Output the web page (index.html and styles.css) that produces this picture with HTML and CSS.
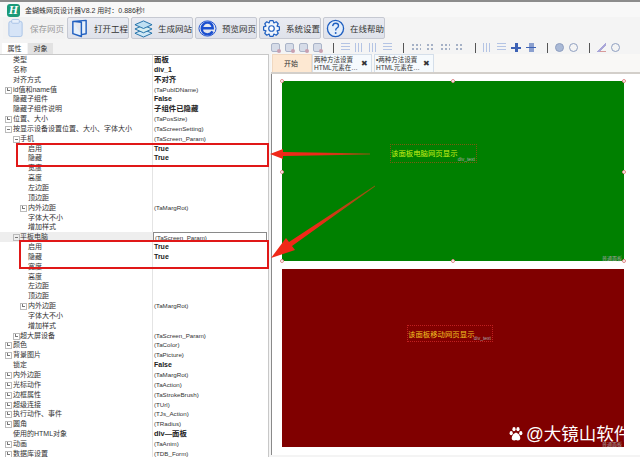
FILE: index.html
```html
<!DOCTYPE html>
<html lang="zh-CN">

<head>
    <meta charset="UTF-8">
    <meta name="viewport" content="width=device-width, initial-scale=1.0">
    <title>金蝶蛛网页设计器</title>
    <link rel="stylesheet" href="styles.css">
</head>

<body>
    <div class="window">
        <header class="titlebar">
            <span class="logo">H</span>
            <span class="title">金蝴蛛网页设计器V8.2 用时：0.886秒!</span>
        </header>

        <nav class="toolbar">
            <button class="tool off">
                <svg viewBox="0 0 20 20" width="19" height="20"><rect x="3" y="3" width="14" height="16" rx="2" fill="#d6e4f7" stroke="#a9c3e6"/><rect x="6" y="1" width="8" height="4" rx="1" fill="#e6effb" stroke="#a9c3e6"/></svg>
                <span>保存网页</span>
            </button>
            <button class="tool">
                <svg viewBox="0 0 20 20" width="19" height="20"><path d="M3 3 L17 2 V16 L12 17 V4 L3 3 V16 L12 19 V17" fill="#e6f0fb" stroke="#1f5fc0" stroke-width="1.500" stroke-linejoin="round"/></svg>
                <span>打开工程</span>
            </button>
            <button class="tool">
                <svg viewBox="0 0 20 20" width="20" height="19"><path d="M10 11 L1 15 L10 19 L19 15 Z" fill="#cfe8f5" stroke="#1d6fa8"/><path d="M10 6.500 L1 10.500 L10 14.500 L19 10.500 Z" fill="#d8eef0" stroke="#1d6fa8"/><path d="M10 2 L1 6 L10 10 L19 6 Z" fill="#bfe0f2" stroke="#1d6fa8"/></svg>
                <span>生成网站</span>
            </button>
            <button class="tool">
                <svg viewBox="0 0 20 20" width="19" height="19"><ellipse cx="10" cy="10" rx="9" ry="8" fill="none" stroke="#1a4fd0" stroke-width="1"/><path d="M4.500 9.800 H15.500 C15.500 5 12.500 3.800 10 3.800 C6.500 3.800 4 6.500 4 10 C4 13.500 6.500 16.200 10 16.200 C12.500 16.200 14.300 15 15.300 13" fill="none" stroke="#1a4fd0" stroke-width="2.600"/></svg>
                <span>预览网页</span>
            </button>
            <button class="tool">
                <svg viewBox="0 0 24 24" width="19" height="19"><path d="M10 2 H14 L15 5 L18 3.500 L20.500 6 L19 9 L22 10 V14 L19 15 L20.500 18 L18 20.500 L15 19 L14 22 H10 L9 19 L6 20.500 L3.500 18 L5 15 L2 14 V10 L5 9 L3.500 6 L6 3.500 L9 5 Z" fill="#eef4fc" stroke="#1f5fc0" stroke-width="1.500" stroke-linejoin="round"/><circle cx="12" cy="12" r="3.500" fill="#fff" stroke="#1f5fc0" stroke-width="1.500"/></svg>
                <span>系统设置</span>
            </button>
            <button class="tool">
                <svg viewBox="0 0 20 20" width="19" height="19"><circle cx="10" cy="10" r="8.500" fill="#e4eefb" stroke="#1f5fc0" stroke-width="1.400"/><path d="M7 7.500 Q7.500 4.500 10.300 4.500 Q13.200 4.500 13.200 7 Q13.200 8.700 11.300 9.700 Q10.200 10.400 10.200 12" fill="none" stroke="#1f5fc0" stroke-width="1.400"/><circle cx="10.200" cy="14.800" r="1" fill="#1f5fc0"/></svg>
                <span>在线帮助</span>
            </button>
        </nav>

        <div class="workspace">
            <section class="props">
                <div class="prop-tabs">
                    <span class="prop-tab active">属性</span>
                    <span class="prop-tab">对象</span>
                </div>
                <div class="grid">
                    <div class="row"><span class="name">类型</span><b class="val big">面板</b></div>
                    <div class="row"><span class="name">名称</span><b class="val">div_1</b></div>
                    <div class="row"><span class="name">对齐方式</span><b class="val big">不对齐</b></div>
                    <div class="row plus"><span class="name">id值和name值</span><span class="val">(TaPubIDName)</span></div>
                    <div class="row"><span class="name">隐藏子组件</span><b class="val">False</b></div>
                    <div class="row"><span class="name">隐藏子组件说明</span><b class="val big">子组件已隐藏</b></div>
                    <div class="row plus"><span class="name">位置、大小</span><span class="val">(TaPosSize)</span></div>
                    <div class="row minus"><span class="name">按显示设备设置位置、大小、字体大小</span><span class="val">(TaScreenSetting)</span></div>
                    <div class="row l1 minus"><span class="name">手机</span><span class="val">(TaScreen_Param)</span></div>
                    <div class="row l2"><span class="name">启用</span><b class="val">True</b></div>
                    <div class="row l2"><span class="name">隐藏</span><b class="val">True</b></div>
                    <div class="row l2"><span class="name">宽度</span></div>
                    <div class="row l2"><span class="name">高度</span></div>
                    <div class="row l2"><span class="name">左边距</span></div>
                    <div class="row l2"><span class="name">顶边距</span></div>
                    <div class="row l2 plus"><span class="name">内外边距</span><span class="val">(TaMargRot)</span></div>
                    <div class="row l2"><span class="name">字体大不小</span></div>
                    <div class="row l2"><span class="name">增加样式</span></div>
                    <div class="row l1 minus current"><span class="name">平板电脑</span><span class="val edit">(TaScreen_Param)</span></div>
                    <div class="row l2"><span class="name">启用</span><b class="val">True</b></div>
                    <div class="row l2"><span class="name">隐藏</span><b class="val">True</b></div>
                    <div class="row l2"><span class="name">宽度</span></div>
                    <div class="row l2"><span class="name">高度</span></div>
                    <div class="row l2"><span class="name">左边距</span></div>
                    <div class="row l2"><span class="name">顶边距</span></div>
                    <div class="row l2 plus"><span class="name">内外边距</span><span class="val">(TaMargRot)</span></div>
                    <div class="row l2"><span class="name">字体大不小</span></div>
                    <div class="row l2"><span class="name">增加样式</span></div>
                    <div class="row l1 plus"><span class="name">超大屏设备</span><span class="val">(TaScreen_Param)</span></div>
                    <div class="row plus"><span class="name">颜色</span><span class="val">(TaColor)</span></div>
                    <div class="row plus"><span class="name">背景图片</span><span class="val">(TaPicture)</span></div>
                    <div class="row"><span class="name">锁定</span><b class="val">False</b></div>
                    <div class="row plus"><span class="name">内外边距</span><span class="val">(TaMargRot)</span></div>
                    <div class="row plus"><span class="name">光标动作</span><span class="val">(TaAction)</span></div>
                    <div class="row plus"><span class="name">边框属性</span><span class="val">(TaStrokeBrush)</span></div>
                    <div class="row plus"><span class="name">超级连接</span><span class="val">(TUrl)</span></div>
                    <div class="row plus"><span class="name">执行动作、事件</span><span class="val">(TJs_Action)</span></div>
                    <div class="row plus"><span class="name">圆角</span><span class="val">(TRadius)</span></div>
                    <div class="row"><span class="name">使用的HTML对象</span><b class="val big">div—面板</b></div>
                    <div class="row plus"><span class="name">动画</span><span class="val">(TaAnim)</span></div>
                    <div class="row plus"><span class="name">数据库设置</span><span class="val">(TDB_Form)</span></div>
                </div>
            </section>

            <section class="design">
                <div class="mini-tools">
                    <i class="mini sq"></i><i class="mini sq"></i><i class="mini sq"></i><i class="mini sq"></i>
                    <i class="sep"></i>
                    <i class="mini lines"></i><i class="mini bars"></i><i class="mini bars"></i><i class="mini lines"></i>
                    <i class="sep"></i>
                    <i class="mini dots"></i><i class="mini dots"></i><i class="mini dots"></i><i class="mini dots"></i>
                    <i class="sep"></i>
                    <i class="mini bars"></i><i class="mini lines"></i><i class="mini cross"></i><i class="mini cross flat"></i>
                    <i class="sep"></i>
                    <i class="mini ball"></i><i class="mini ball ring"></i>
                    <i class="sep"></i>
                    <i class="mini pen"></i><i class="mini ball ring"></i>
                </div>
                <div class="doc-tabs">
                    <span class="doc-tab start">开始</span>
                    <span class="doc-tab"><span class="doc-name">两种方法设置<br>HTML元素在…</span><span class="close">✖</span></span>
                    <span class="doc-tab"><span class="doc-name">•两种方法设置<br>HTML元素在…</span><span class="close">✖</span></span>
                </div>
                <div class="canvas">
                    <div class="panel green">
                        <i class="knob k1"></i><i class="knob k2"></i><i class="knob k3"></i><i class="knob k4"></i><i class="knob k5"></i><i class="knob k6"></i><i class="knob k7"></i><i class="knob k8"></i>
                        <div class="label pc">该面板电脑网页显示<small>div_text</small></div>
                        <em class="tag">普通面板</em>
                    </div>
                    <div class="panel red">
                        <div class="label mobile">该面板移动网页显示<small>div_text</small></div>
                        <em class="tag">普通面板</em>
                    </div>
                </div>
            </section>
        </div>

        <div class="mark mark-a"></div>
        <div class="mark mark-b"></div>
        <svg class="arrows" viewBox="0 0 640 457" width="640" height="457">
            <defs>
                <linearGradient id="fade-a" x1="1" y1="0" x2="0" y2="0">
                    <stop offset="0" stop-color="#8a5a10"/>
                    <stop offset="0.5" stop-color="#f02818"/>
                </linearGradient>
                <linearGradient id="fade-b" x1="1" y1="0" x2="0" y2="1">
                    <stop offset="0" stop-color="#8a5a10"/>
                    <stop offset="0.6" stop-color="#f02818"/>
                </linearGradient>
            </defs>
            <path d="M370 153.500 L283 152 L283 149 L270 154 L283 159 L283 156 L370 154.500 Z" fill="url(#fade-a)"/>
            <path d="M375 185.500 L289 242 L286 238 L271 258 L295 250 L292 246 L375 186.500 Z" fill="url(#fade-b)"/>
        </svg>
        <div class="watermark">
            <svg viewBox="0 0 20 20" width="16" height="16"><ellipse cx="4" cy="9" rx="2" ry="2.600" fill="#fff"/><ellipse cx="7.500" cy="4" rx="2" ry="2.600" fill="#fff"/><ellipse cx="12.500" cy="4" rx="2" ry="2.600" fill="#fff"/><ellipse cx="16" cy="9" rx="2" ry="2.600" fill="#fff"/><path d="M10 8 Q6 9 5 13 Q3.500 18 8 18 Q10 17 12 18 Q16.500 18 15 13 Q14 9 10 8 Z" fill="#fff"/></svg>
            <span>@大镜山软件</span>
        </div>
    </div>
</body>

</html>
```

FILE: styles.css
```css
* {
    margin: 0;
    padding: 0;
    box-sizing: border-box;
}

body {
    background: #f4f4f4;
    font-family: "Liberation Sans", "Noto Sans CJK SC", sans-serif;
    font-size: 9px;
    color: #333;
    overflow: hidden;
}

.window {
    position: relative;
    width: 640px;
    height: 457px;
    overflow: hidden;
}

/* title */
.titlebar {
    display: flex;
    align-items: center;
    gap: 5px;
    height: 17px;
    padding: 1px 0 0 7px;
    background: #f8f8f8;
    border-top: 2px solid #8c8c8c;
}

.logo {
    width: 13px;
    height: 13px;
    border-radius: 3px;
    background: #1b9a78;
    color: #fff;
    font: italic bold 12px/13px "Liberation Serif", serif;
    text-align: center;
}

.title {
    font-size: 7px;
    color: #333;
    white-space: nowrap;
}

/* big buttons */
.toolbar {
    display: flex;
    gap: 2px;
    height: 24px;
    padding-left: 3px;
    background: #f4f4f4;
}

.tool {
    display: flex;
    align-items: center;
    gap: 5px;
    width: 62px;
    height: 22px;
    padding-left: 2px;
    background: linear-gradient(#e9ebf2, #dfe2ea);
    border: 1px solid #c6c9d2;
    border-radius: 2px;
    font: 8.500px "Liberation Sans", "Noto Sans CJK SC", sans-serif;
    color: #333;
}

.tool.off {
    background: #f2f2f2;
    border-color: #f2f2f2;
    color: #9a9a9a;
}

.tool span {
    white-space: nowrap;
}

/* main area */
.workspace {
    display: flex;
    height: 414px;
}

.props {
    width: 271px;
    flex: none;
    padding-top: 2px;
}

.prop-tabs {
    display: flex;
    gap: 1px;
    height: 11px;
    padding-left: 2px;
}

.prop-tab {
    width: 25px;
    line-height: 11px;
    text-align: center;
    font-size: 7px;
    background: #e2e2e2;
}

.prop-tab.active {
    background: #fff;
}

.grid {
    width: 269px;
    height: 404px;
    background: #fff;
    border: 1px solid #c8c8c8;
    border-width: 1px 1px 0 0;
    overflow: hidden;
    background-image: linear-gradient(#e4e4e4, #e4e4e4);
    background-size: 1px 100%;
    background-position: 152px 0;
    background-repeat: no-repeat;
}

.row {
    position: relative;
    display: flex;
    height: 9.850px;
    line-height: 10px;
    font-size: 7px;
    white-space: nowrap;
}

.name {
    width: 154px;
    flex: none;
    padding-left: 13px;
}

.l1 .name {
    padding-left: 20px;
}

.l2 .name {
    padding-left: 28px;
}

.val {
    font-size: 6.200px;
}

b.val {
    font-size: 7px;
    color: #222;
}

b.val.big {
    font-size: 7.400px;
}

.plus::before,
.minus::before {
    content: "";
    position: absolute;
    left: 5px;
    top: 2px;
    width: 5px;
    height: 5px;
    border: 1px solid #bbb;
    background: linear-gradient(#777, #777) center / 3px 1px no-repeat;
}

.plus::after {
    content: "";
    position: absolute;
    left: 7px;
    top: 3px;
    width: 1px;
    height: 3px;
    background: #777;
}

.l1.plus::before,
.l1.minus::before {
    left: 13px;
}

.l1.plus::after {
    left: 15px;
}

.l2.plus::before {
    left: 20px;
}

.l2.plus::after {
    left: 22px;
}

.current .name {
    background: #eeeeee;
}

.edit {
    width: 114px;
    margin-left: -1px;
    padding-left: 1px;
    border: 1px solid #8a8a8a;
    line-height: 9px;
}

/* right side */
.design {
    flex: 1;
    min-width: 0;
}

.mini-tools {
    display: flex;
    align-items: center;
    gap: 5px;
    height: 13px;
}

.mini {
    display: block;
    width: 9px;
    height: 9px;
    flex: none;
}

.sq {
    position: relative;
    background: #d6dce8;
    border: 1px solid #aab4c8;
    border-radius: 2px;
}

.sq::after {
    content: "";
    position: absolute;
    right: -2px;
    bottom: -2px;
    width: 4px;
    height: 4px;
    border-radius: 50%;
    background: #c8a0b0;
}

.lines {
    background: repeating-linear-gradient(#b4c4e4 0 1px, transparent 1px 3px);
}

.bars {
    background: repeating-linear-gradient(90deg, #b4c4e4 0 1px, transparent 1px 3px);
}

.dots {
    width: 9.500px;
    background: radial-gradient(#a5b1c6 30%, transparent 35%) 0 0 / 4px 4px;
}

.cross {
    width: 10px;
    background: linear-gradient(#3d62b5, #3d62b5) center / 100% 2px no-repeat, linear-gradient(#3d62b5, #3d62b5) center / 3px 100% no-repeat;
}

.cross.flat {
    background: linear-gradient(#3d62b5, #3d62b5) center / 100% 1px no-repeat, linear-gradient(#8ba0cf, #8ba0cf) center / 5px 100% no-repeat;
}

.ball {
    border-radius: 50%;
    background: #a9b9d6;
    border: 1px solid #8f9fc0;
}

.ball.ring {
    background: transparent;
}

.pen {
    background: linear-gradient(135deg, transparent 45%, #a9a6d8 45% 65%, transparent 65%), linear-gradient(#d89a9a, #d89a9a) bottom / 100% 1px no-repeat;
}

.sep {
    display: block;
    width: 1px;
    height: 10px;
    margin: 0 2px 0 6px;
    flex: none;
    background: #555;
}

.doc-tabs {
    display: flex;
    align-items: flex-end;
    height: 20px;
    background: #f9f8f6;
    border-bottom: 2px solid #d3cfca;
}

.doc-tab {
    display: flex;
    align-items: center;
    justify-content: space-between;
    width: 60px;
    height: 18px;
    margin-right: 2px;
    padding: 0 3px 0 1px;
    background: #f6fafd;
    border: 1px solid #d5dfea;
    border-bottom: 0;
    font-size: 6.500px;
    line-height: 8px;
}

.doc-tab.start {
    justify-content: center;
    width: 40px;
    margin: 0 0 0 1px;
    background: #fde8d2;
    border-color: #f0d8c0;
    font-size: 7px;
}

.doc-name {
    white-space: nowrap;
}

.close {
    font-size: 8px;
    color: #333;
}

.canvas {
    display: flex;
    flex-direction: column;
    gap: 8px;
    height: 381px;
    padding: 7px 0 0 10px;
    background: #fff;
    border-left: 1px solid #8a8a8a;
}

.panel {
    position: relative;
    width: 342px;
}

.green {
    height: 180px;
    background: #008000;
}

.red {
    height: 178px;
    background: #800000;
}

.knob {
    position: absolute;
    width: 4px;
    height: 4px;
    border: 1px solid #e08a8a;
    border-radius: 50%;
    background: #fff;
}

.k1 { left: -2px; top: -2px; }
.k2 { left: 169px; top: -2px; }
.k3 { right: -2px; top: -2px; }
.k4 { left: -2px; top: 89px; }
.k5 { right: -2px; top: 89px; }
.k6 { left: -2px; bottom: -2px; }
.k7 { left: 169px; bottom: -2px; }
.k8 { right: -2px; bottom: -2px; }

.label {
    position: absolute;
    font-size: 7.400px;
    line-height: 13px;
    white-space: nowrap;
}

.label small {
    position: absolute;
    right: 1px;
    bottom: 0;
    font-size: 5px;
    line-height: 5px;
    color: #a8a8a8;
}

.pc {
    left: 108px;
    top: 63px;
    width: 87px;
    height: 19px;
    padding-top: 2px;
    border: 1px dotted #7a5a10;
    color: #c8f018;
}

.mobile {
    left: 125px;
    top: 56px;
    width: 86px;
    height: 17px;
    padding-top: 2px;
    border: 1px dotted #c02020;
    color: #f4c020;
}

.tag {
    position: absolute;
    right: 2px;
    bottom: 0;
    font-size: 5px;
    line-height: 5px;
    font-style: normal;
    color: #a0a0a0;
}

/* annotations drawn over the shot */
.mark {
    position: absolute;
    height: 24px;
    border: 2px solid #e01818;
}

.mark-a {
    left: 16px;
    top: 143px;
    width: 253px;
}

.mark-b {
    left: 19px;
    top: 240px;
    width: 250px;
    height: 29px;
}

.arrows {
    position: absolute;
    left: 0;
    top: 0;
    pointer-events: none;
}

.watermark {
    position: absolute;
    left: 508px;
    top: 426px;
    display: flex;
    align-items: center;
    gap: 2px;
    color: #fff;
    font-size: 17.500px;
    line-height: 14px;
    white-space: nowrap;
}
```
